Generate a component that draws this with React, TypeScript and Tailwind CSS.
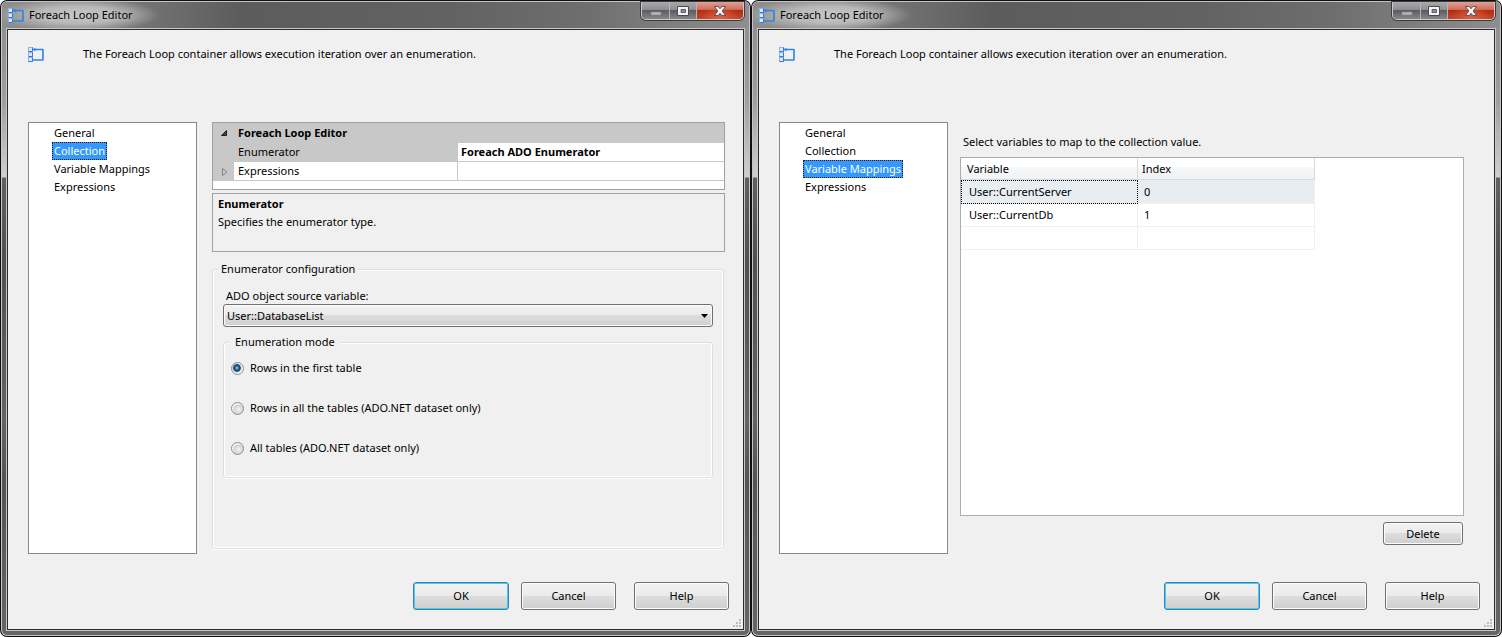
import { useId, useState, type ReactNode } from 'react'
import { clsx } from 'clsx'

const SECTIONS = ['General', 'Collection', 'Variable Mappings', 'Expressions']

const ENUMERATION_MODES = [
  'Rows in the first table',
  'Rows in all the tables (ADO.NET dataset only)',
  'All tables (ADO.NET dataset only)',
]

const MAPPINGS = [
  { variable: 'User::CurrentServer', index: '0' },
  { variable: 'User::CurrentDb', index: '1' },
  { variable: '', index: '' },
]

/* Container glyph: three stacked tiles with a loop leaving the top one */
function LoopIcon() {
  return (
    <svg aria-hidden="true" width="16" height="16" viewBox="0 0 16 16" className="shrink-0">
      <path d="M5 3.5h9.5q.5 0 .5.5v9.5q0 .5-.5.5H5" fill="none" stroke="#2a86e2" strokeWidth="1.6" />
      <path d="M7.4 1.8 5 3.5l2.4 2z" fill="#2a86e2" />
      {[1.5, 6.5, 11.5].map((y) => (
        <g key={y}>
          <rect x="0.5" y={y} width="4" height="4" fill="#d9e9fb" stroke="#8fb4ea" />
          <path d={`M0.5 ${y + 4}h4v-4`} fill="none" stroke="#3a78d0" />
        </g>
      ))}
    </svg>
  )
}

function CaptionButtons() {
  return (
    <div className="flex h-[18px] overflow-hidden rounded-b-[5px] border border-t-0 border-[#c9c9c9] shadow-[0_0_0_1px_#3c3c3c]">
      <button
        type="button"
        aria-label="Minimize"
        className="flex w-7 items-center justify-center border-r border-[#b4b4b4] bg-[linear-gradient(#a9a9ab,#8d8d90_48%,#5d5d61_50%,#85858a)]"
      >
        <svg aria-hidden="true" width="12" height="10" viewBox="0 0 12 10">
          <path d="M1 6h10v3H1z" fill="#b5b5b5" stroke="#8a8a8c" strokeWidth="0.6" />
        </svg>
      </button>
      <button
        type="button"
        aria-label="Maximize"
        className="flex w-[27px] items-center justify-center border-r border-[#b4b4b4] bg-[linear-gradient(#a9a9ab,#8d8d90_48%,#5d5d61_50%,#85858a)]"
      >
        <svg aria-hidden="true" width="12" height="10" viewBox="0 0 12 10">
          <path d="M.5.5h11v9H.5z" fill="#f4f4f4" stroke="#4a4a5c" />
          <path d="M4 3.5h4.5v3H4z" fill="#8c8c90" stroke="#4a4a5c" strokeWidth="0.8" />
        </svg>
      </button>
      <button
        type="button"
        aria-label="Close"
        className="flex w-[46px] items-center justify-center bg-[radial-gradient(ellipse_at_50%_100%,#e0603c_0%,transparent_60%),linear-gradient(#dfa195,#cf6a57_46%,#b32c12_50%,#c4462c)]"
      >
        <svg aria-hidden="true" width="12" height="10" viewBox="0 0 12 10">
          <path
            d="M.5.5h3.6L6 2.7 7.9.5h3.6L8.2 5l3.3 4.5H7.9L6 7.3 4.1 9.5H.5L3.8 5z"
            fill="#f7f7f7"
            stroke="#54485a"
            strokeWidth="0.9"
          />
        </svg>
      </button>
    </div>
  )
}

function PushButton({
  children,
  isDefault,
  className,
}: {
  children: ReactNode
  isDefault?: boolean
  className: string
}) {
  return (
    <button
      type="button"
      className={clsx(
        'rounded-[3px] border bg-[linear-gradient(#f2f2f2,#ebebeb_49%,#dddddd_50%,#cfcfcf)]',
        isDefault
          ? 'border-[#3c7fb1] shadow-[inset_0_0_0_1px_#46cdf5]'
          : 'border-[#707070] shadow-[inset_0_0_0_1px_#fcfcfc]',
        className
      )}
    >
      {children}
    </button>
  )
}

function SectionList({ initial }: { initial: string }) {
  const [selected, setSelected] = useState(initial)

  return (
    <nav aria-label="Pages" className="w-[169px] shrink-0 border border-[#828790] bg-white pt-px">
      <ul className="flex flex-col items-start pl-[23px]">
        {SECTIONS.map((section) => (
          <li key={section} className="flex h-[18px]">
            <button
              type="button"
              onClick={() => setSelected(section)}
              className={clsx(
                'border px-px leading-4',
                section === selected
                  ? 'border-dotted border-[#2b1600] bg-[#3399ff] text-white'
                  : 'border-transparent'
              )}
            >
              {section}
            </button>
          </li>
        ))}
      </ul>
    </nav>
  )
}

function EditorWindow({ section, children }: { section: string; children: ReactNode }) {
  return (
    // Aero frame: black edge, light bevel, glass, light bevel, dark edge
    <section className="flex min-w-0 flex-1 rounded-[7px] bg-[#101012] p-px">
      <div className="flex min-w-0 flex-1 rounded-[6px] bg-[#c4c4c4] p-px">
        <div className="flex min-w-0 flex-1 flex-col rounded-[5px] bg-[linear-gradient(#8c8c8c,#969696_60px,#a0a0a0_100px,#cfcfd0_175px,#616161_176px,#505050_260px,#646464_420px,#545454_480px,#666)] px-1 pb-1">
          <header className="-mx-1 flex h-[26px] items-start justify-between rounded-t-[5px] bg-[radial-gradient(ellipse_82px_17px_at_76px_13px,#c8c8c8_0%,#b8b8b8_50%,transparent_100%),linear-gradient(90deg,#8e8e8e,#808080_12%,#5c5c5c_32%,#626262_60%,#6e6e6e_78%,#8e8e8e)] pr-[5px]">
            <div className="flex h-[26px] items-center gap-[5px] pl-[6px]">
              <LoopIcon />
              <h1>Foreach Loop Editor</h1>
            </div>
            <CaptionButtons />
          </header>
          <div className="flex flex-1 border border-[#c8c8c8]">
            <div className="flex min-w-0 flex-1 flex-col border border-[#2c2c2c] bg-[#f0f0f0]">
              <div className="flex h-[92px] items-start gap-[39px] pt-4 pl-5">
                <LoopIcon />
                <p className="leading-4">
                  The Foreach Loop container allows execution iteration over an enumeration.
                </p>
              </div>
              <div className="flex flex-1 pl-5">
                <SectionList initial={section} />
                {children}
              </div>
              <footer className="relative flex justify-end pt-7 pr-[14px] pb-[19px]">
                <PushButton isDefault className="mr-3 h-7 w-24">
                  OK
                </PushButton>
                <PushButton className="mr-[18px] h-7 w-[95px]">Cancel</PushButton>
                <PushButton className="h-7 w-[95px]">Help</PushButton>
                <svg
                  aria-hidden="true"
                  width="9"
                  height="9"
                  viewBox="0 0 9 9"
                  className="absolute right-px bottom-px"
                >
                  <path
                    d="M6 0h2v2H6zM3 3h2v2H3zM6 3h2v2H6zM0 6h2v2H0zM3 6h2v2H3zM6 6h2v2H6z"
                    fill="#bdbdbd"
                  />
                </svg>
              </footer>
            </div>
          </div>
        </div>
      </div>
    </section>
  )
}

function PropertyGrid() {
  return (
    <div className="h-[68px] border border-[#a0a0a0] bg-white">
      <table className="w-full table-fixed border-separate border-spacing-0 text-left">
        <colgroup>
          <col className="w-[21px]" />
          <col className="w-[224px]" />
          <col />
        </colgroup>
        <tbody>
          <tr className="h-5 bg-[#c8c8c8]">
            <td className="p-0">
              <svg aria-hidden="true" width="6" height="6" viewBox="0 0 6 6" className="ml-2">
                <path d="M5.5.5v5h-5z" fill="#404040" stroke="#202020" />
              </svg>
            </td>
            <th colSpan={2} className="p-0 pl-1 leading-4 font-bold">
              Foreach Loop Editor
            </th>
          </tr>
          <tr className="h-[19px]">
            <td className="bg-[#c8c8c8] p-0" />
            <th className="border-b border-[#c8c8c8] bg-[#c8c8c8] p-0 pl-1 leading-4 font-normal">
              Enumerator
            </th>
            <td className="border-b border-[#c8c8c8] p-0 pl-[3px] leading-4 font-bold">
              Foreach ADO Enumerator
            </td>
          </tr>
          <tr className="h-[19px]">
            <td className="bg-[#c8c8c8] p-0">
              <svg aria-hidden="true" width="6" height="8" viewBox="0 0 6 8" className="ml-[9px]">
                <path d="M.5.5 5 4 .5 7.5z" fill="none" stroke="#868686" />
              </svg>
            </td>
            <th className="border-r border-b border-[#c8c8c8] p-0 pl-1 leading-4 font-normal">
              Expressions
            </th>
            <td className="border-b border-[#c8c8c8] p-0" />
          </tr>
        </tbody>
      </table>
    </div>
  )
}

function GroupBox({
  title,
  legendClassName,
  className,
  children,
}: {
  title: string
  legendClassName: string
  className: string
  children: ReactNode
}) {
  return (
    <fieldset
      className={clsx(
        'min-w-0 rounded-[3px] border border-[#d5dfe5] shadow-[inset_0_0_0_1px_#fff,0_1px_0_#fff]',
        className
      )}
    >
      <legend className={clsx('bg-[#f0f0f0] leading-[18px]', legendClassName)}>{title}</legend>
      {children}
    </fieldset>
  )
}

function CollectionPage() {
  const sourceId = useId()
  const modeName = useId()

  return (
    <div className="mr-[18px] mb-[5px] ml-[15px] flex min-w-0 flex-1 flex-col">
      <PropertyGrid />
      <div className="mt-[3px] h-[59px] border border-[#a0a0a0] px-[5px] pt-px leading-[18px]">
        <p className="font-bold">Enumerator</p>
        <p>Specifies the enumerator type.</p>
      </div>
      <GroupBox
        title="Enumerator configuration"
        legendClassName="ml-[5px] px-[3px]"
        className="mt-2 mr-px flex-1"
      >
        <div className="px-[10px] pt-[10px]">
          <label htmlFor={sourceId} className="block pl-[3px] leading-4">
            ADO object source variable:
          </label>
          <div className="relative">
            <select
              id={sourceId}
              className="block h-[23px] w-full appearance-none rounded-[3px] border border-[#707070] bg-[linear-gradient(#f2f2f2,#ebebeb_49%,#dddddd_50%,#cfcfcf)] pl-[3px] shadow-[inset_0_0_0_1px_#fcfcfc]"
            >
              <option>User::DatabaseList</option>
            </select>
            <svg
              aria-hidden="true"
              width="7"
              height="4"
              viewBox="0 0 7 4"
              className="pointer-events-none absolute top-[10px] right-[5px]"
            >
              <path d="M0 0h7L3.5 4z" fill="#000" />
            </svg>
          </div>
          <GroupBox
            title="Enumeration mode"
            legendClassName="ml-[5px] px-[6px]"
            className="mt-[6px]"
          >
            <div className="flex flex-col gap-[22px] px-[7px] pt-2 pb-5">
              {ENUMERATION_MODES.map((mode, i) => (
                <label key={mode} className="flex items-center gap-[6px] leading-[18px]">
                  <input
                    type="radio"
                    name={modeName}
                    defaultChecked={i === 0}
                    className="size-[13px] appearance-none rounded-full border border-[#8e8f8f] bg-[radial-gradient(circle_at_60%_60%,#f2f2f2,#d2d5d9_45%,#c0c4c8_50%,#f4f4f4_58%)] checked:bg-[radial-gradient(circle_at_45%_45%,#8fe0fa_0%,#1f7fb0_20%,#10304f_38%,#b8c4cc_48%,#f4f4f4_60%)]"
                  />
                  {mode}
                </label>
              ))}
            </div>
          </GroupBox>
        </div>
      </GroupBox>
    </div>
  )
}

function VariableMappingsPage() {
  return (
    <div className="mr-[30px] mb-[9px] ml-3 flex min-w-0 flex-1 flex-col pt-[11px]">
      <p className="pl-[3px] leading-[18px]">Select variables to map to the collection value.</p>
      <div className="mt-[6px] mb-[6px] flex-1 border border-[#abadb3] bg-white">
        <table className="table-fixed border-separate border-spacing-0 text-left">
          <colgroup>
            <col className="w-[177px]" />
            <col className="w-[177px]" />
          </colgroup>
          <thead>
            <tr className="h-[22px] bg-[linear-gradient(#fff_40%,#f7f8fa_42%,#f1f2f4)]">
              <th className="border-r border-b border-[#d9dadc] p-0 pl-[6px] leading-4 font-normal">
                Variable
              </th>
              <th className="border-r border-b border-[#d9dadc] p-0 pl-1 leading-4 font-normal">
                Index
              </th>
            </tr>
          </thead>
          <tbody>
            {MAPPINGS.map(({ variable, index }, i) => (
              <tr key={i} className={i === 0 ? 'h-6 bg-[#e8edf1]' : 'h-[23px]'}>
                <td
                  className={clsx(
                    'p-0 leading-4',
                    i === 0
                      ? 'border border-dotted border-black pl-[7px]'
                      : 'border-r border-b border-[#f0f0f0] pl-2'
                  )}
                >
                  {variable}
                </td>
                <td className="border-r border-b border-[#f0f0f0] p-0 pl-[6px] leading-4">
                  {index}
                </td>
              </tr>
            ))}
          </tbody>
        </table>
      </div>
      <div className="flex justify-end pr-px">
        <PushButton className="h-[23px] w-20">Delete</PushButton>
      </div>
    </div>
  )
}

export default function App() {
  return (
    <main className="flex min-h-screen bg-white font-['Noto_Sans','Open_Sans',sans-serif] text-[11px] leading-4 text-black">
      <EditorWindow section="Collection">
        <CollectionPage />
      </EditorWindow>
      <EditorWindow section="Variable Mappings">
        <VariableMappingsPage />
      </EditorWindow>
    </main>
  )
}
